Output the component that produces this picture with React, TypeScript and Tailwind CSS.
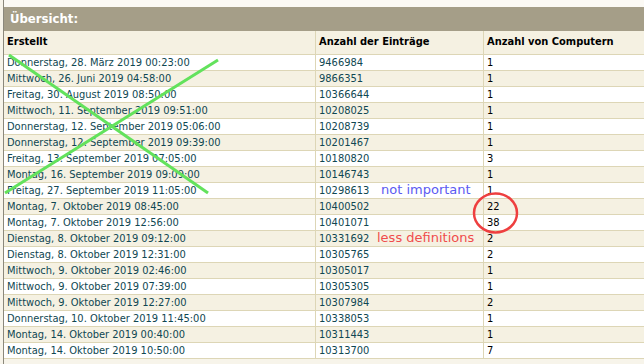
import React from "react";

const rows: [string, string, string][] = [
  ["Donnerstag, 28. März 2019 00:23:00", "9466984", "1"],
  ["Mittwoch, 26. Juni 2019 04:58:00", "9866351", "1"],
  ["Freitag, 30. August 2019 08:50:00", "10366644", "1"],
  ["Mittwoch, 11. September 2019 09:51:00", "10208025", "1"],
  ["Donnerstag, 12. September 2019 05:06:00", "10208739", "1"],
  ["Donnerstag, 12. September 2019 09:39:00", "10201467", "1"],
  ["Freitag, 13. September 2019 07:05:00", "10180820", "3"],
  ["Montag, 16. September 2019 09:09:00", "10146743", "1"],
  ["Freitag, 27. September 2019 11:05:00", "10298613", "1"],
  ["Montag, 7. Oktober 2019 08:45:00", "10400502", "22"],
  ["Montag, 7. Oktober 2019 12:56:00", "10401071", "38"],
  ["Dienstag, 8. Oktober 2019 09:12:00", "10331692", "2"],
  ["Dienstag, 8. Oktober 2019 12:31:00", "10305765", "2"],
  ["Mittwoch, 9. Oktober 2019 02:46:00", "10305017", "1"],
  ["Mittwoch, 9. Oktober 2019 07:39:00", "10305305", "1"],
  ["Mittwoch, 9. Oktober 2019 12:27:00", "10307984", "2"],
  ["Donnerstag, 10. Oktober 2019 11:45:00", "10338053", "1"],
  ["Montag, 14. Oktober 2019 00:40:00", "10311443", "1"],
  ["Montag, 14. Oktober 2019 10:50:00", "10313700", "7"],
];

export default function App() {
  return (
    <div className="relative w-[644px] h-[364px] overflow-hidden bg-[#f7f4ea] flex font-['DejaVu_Sans_Condensed','DejaVu_Sans',sans-serif] text-[11px]">
      <div className="w-[3px] shrink-0" />
      <div className="w-px shrink-0 bg-[#8b887c]" />
      <div className="flex-1 flex flex-col">
        <div className="h-[7px] bg-[#fbf9f4]" />
        <div className="h-[24px] bg-[#a59e88] flex items-center pl-[6px] text-white font-bold text-[13px]">
          Übersicht:
        </div>
        <div className="grid grid-cols-[312px_168px_1fr] h-[24px] bg-[#f5f1e2] border-b border-[#ddd6b6] font-bold text-black">
          <div className="pl-[3px] flex items-center border-r border-[#ddd6b6]">Erstellt</div>
          <div className="pl-[3px] flex items-center border-r border-[#ddd6b6]">Anzahl der Einträge</div>
          <div className="pl-[3px] flex items-center">Anzahl von Computern</div>
        </div>
        {rows.map((r, i) => (
          <div
            key={i}
            className={`grid grid-cols-[312px_168px_1fr] h-[16px] border-b border-[#ddd6b6] leading-[15px] ${
              i % 2 === 0 ? "bg-white" : "bg-[#f5f1e2]"
            }`}
          >
            <div className="pl-[3px] border-r border-[#ddd6b6] text-[#0f4752] whitespace-nowrap">{r[0]}</div>
            <div className="pl-[3px] border-r border-[#ddd6b6] text-[#0f4752]">{r[1]}</div>
            <div className="pl-[3px] text-black">{r[2]}</div>
          </div>
        ))}
      </div>

      <svg className="absolute inset-0 pointer-events-none" width="644" height="364" viewBox="0 0 644 364">
        <line x1="9" y1="55" x2="208" y2="193" stroke="#63e25c" strokeWidth="3" />
        <line x1="218" y1="60" x2="5" y2="193" stroke="#63e25c" strokeWidth="3" />
        <ellipse cx="495.5" cy="213" rx="21.5" ry="19.5" fill="none" stroke="#ee3f3f" strokeWidth="2.5" />
      </svg>

      <span className="absolute left-[381px] top-[182px] leading-[16px] text-[13px] text-[#5b5bf2] font-['DejaVu_Sans',sans-serif] whitespace-nowrap">
        not important
      </span>
      <span className="absolute left-[377px] top-[230px] leading-[16px] text-[13px] text-[#f04c4c] font-['DejaVu_Sans',sans-serif] whitespace-nowrap">
        less definitions
      </span>
    </div>
  );
}
